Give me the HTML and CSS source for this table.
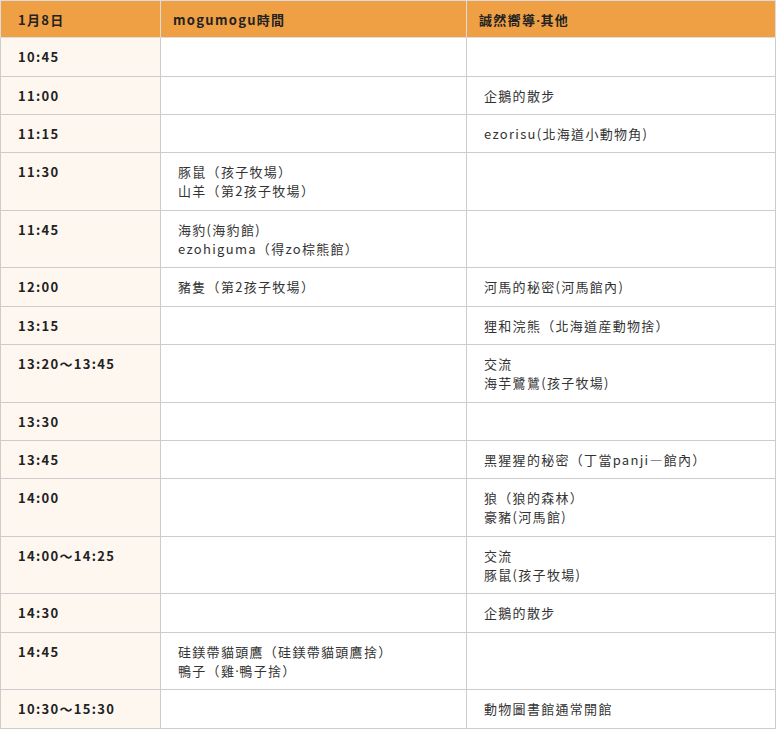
FILE: index.html
```html
<!DOCTYPE html>
<html lang="zh-Hant">
<head>
<meta charset="utf-8">
<link rel="stylesheet" href="styles.css">
</head>
<body>
<table class="schedule">
  <thead>
    <tr>
      <th class="col-time">1月8日</th>
      <th class="col-a">mogumogu時間</th>
      <th class="col-b">誠然嚮導<span class="dot">·</span>其他</th>
    </tr>
  </thead>
  <tbody>
    <tr><td class="time">10:45</td><td></td><td></td></tr>
    <tr><td class="time">11:00</td><td></td><td>企鵝的散步</td></tr>
    <tr><td class="time">11:15</td><td></td><td>ezorisu(北海道小動物角)</td></tr>
    <tr><td class="time">11:30</td><td>豚鼠（孩子牧場）<br>山羊（第2孩子牧場）</td><td></td></tr>
    <tr><td class="time">11:45</td><td>海豹(海豹館)<br>ezohiguma（得zo棕熊館）</td><td></td></tr>
    <tr><td class="time">12:00</td><td>豬隻（第2孩子牧場）</td><td>河馬的秘密(河馬館內)</td></tr>
    <tr><td class="time">13:15</td><td></td><td>狸和浣熊（北海道産動物捨）</td></tr>
    <tr><td class="time">13:20～13:45</td><td></td><td>交流<br>海芋鷺鷥(孩子牧場)</td></tr>
    <tr><td class="time">13:30</td><td></td><td></td></tr>
    <tr><td class="time">13:45</td><td></td><td>黑猩猩的秘密（丁當panji—館內）</td></tr>
    <tr><td class="time">14:00</td><td></td><td>狼（狼的森林）<br>豪豬(河馬館)</td></tr>
    <tr><td class="time">14:00～14:25</td><td></td><td>交流<br>豚鼠(孩子牧場)</td></tr>
    <tr><td class="time">14:30</td><td></td><td>企鵝的散步</td></tr>
    <tr><td class="time">14:45</td><td>硅鎂帶貓頭鷹（硅鎂帶貓頭鷹捨）<br>鴨子（雞<span class="dot">·</span>鴨子捨）</td><td></td></tr>
    <tr><td class="time">10:30～15:30</td><td></td><td>動物圖書館通常開館</td></tr>
  </tbody>
</table>
</body>
</html>
```
FILE: styles.css
```css
html, body {
  margin: 0;
  padding: 0;
  background: #ffffff;
}
body {
  font-family: "Noto Sans CJK TC", "Noto Sans", sans-serif;
  font-size: 13px;
  color: #333333;
}
.schedule {
  width: 776px;
  border-collapse: collapse;
  table-layout: fixed;
}
.schedule th,
.schedule td {
  box-sizing: border-box;
  border: 1px solid #cccccc;
  padding: 9px 17px;
  line-height: 19.3px;
  text-align: left;
  vertical-align: top;
  letter-spacing: 0.1em;
}
.schedule th {
  background: #f0a044;
  color: #222222;
  font-weight: bold;
  border-color: #dddddd;
  padding: 9px 12px 8px 12px;
}
.schedule th.col-time {
  padding-left: 17px;
}
.col-time { width: 160px; }
.col-a { width: 306px; }
.schedule td.time {
  background: #fef7f0;
  font-weight: bold;
  color: #222222;
}
.dot {
  font-family: "Noto Sans", sans-serif;
  letter-spacing: 0.05em;
  line-height: 1;
}
```
